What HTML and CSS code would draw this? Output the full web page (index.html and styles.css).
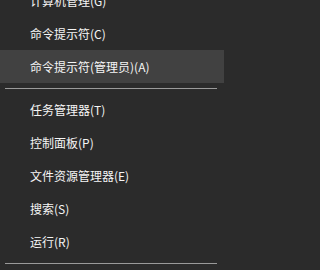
FILE: index.html
```html
<!DOCTYPE html>
<html lang="zh-CN">
<head>
<meta charset="utf-8">
<link rel="stylesheet" href="styles.css">
</head>
<body>
<div class="menu">
  <div class="item">计算机管理(G)</div>
  <div class="item">命令提示符(C)</div>
  <div class="item active">命令提示符(管理员)(A)</div>
  <div class="sep"></div>
  <div class="item">任务管理器(T)</div>
  <div class="item">控制面板(P)</div>
  <div class="item">文件资源管理器(E)</div>
  <div class="item">搜索(S)</div>
  <div class="item">运行(R)</div>
  <div class="sep"></div>
</div>
</body>
</html>
```
FILE: styles.css
```css
html, body {
  margin: 0;
  padding: 0;
  background: #2b2b2b;
  height: 100%;
  overflow: hidden;
}
.menu {
  width: 224px;
  display: flex;
  flex-direction: column;
  margin-top: -16px;
  font-family: "Microsoft YaHei UI", "Noto Sans CJK SC", "Noto Sans", sans-serif;
  font-size: 12px;
  color: #f5f5f5;
}
.item {
  height: 33px;
  display: flex;
  align-items: center;
  padding-left: 30px;
  white-space: nowrap;
}
.item.active {
  background: #414141;
}
.sep {
  height: 10px;
  display: flex;
  align-items: center;
  padding: 0 7px 0 5px;
}
.sep::before {
  content: "";
  flex: 1;
  height: 1px;
  background: #9a9a9a;
}
```
